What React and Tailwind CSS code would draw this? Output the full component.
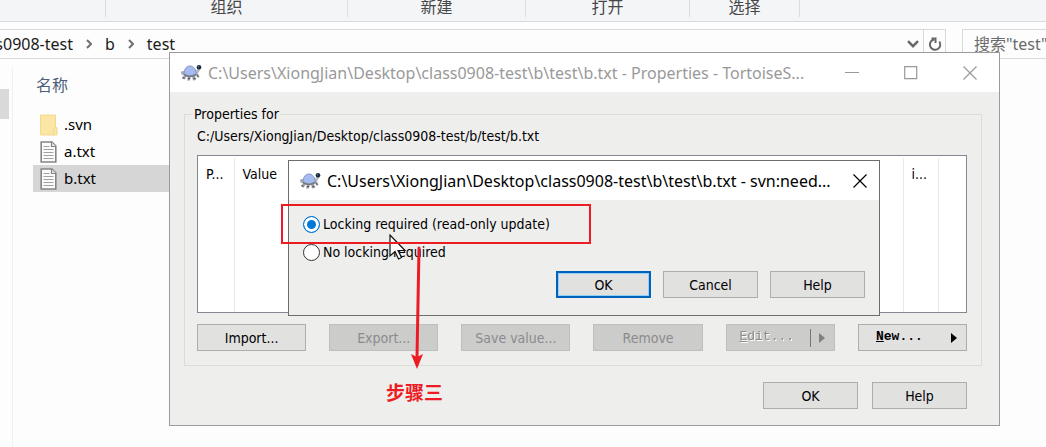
import React from "react";

const ui = "font-['Noto_Sans','Noto_Sans_CJK_SC',sans-serif]";
const dialogText = "font-['DejaVu_Sans_Condensed','Noto_Sans',sans-serif] text-sm";

function Turtle() {
  return (
    <svg width="22" height="18" viewBox="0 0 22 18" aria-hidden="true" className="shrink-0">
      <path d="M1 8c1-1.500 3-1 4 0v2.500L3 11C1.500 11 .8 9.500 1 8z" fill="#a9acb3" />
      <path d="M4 11l-2 3.500 2.500 1L7 12zM8 12l-1 4.500h3L11 12zM12 12l1 4.500 3-.5-1-4.500zM15 10l3 4 1.500-1.500L17 8z" fill="#9b9da4" />
      <path d="M15 8.500l3-4.500 2.500 1.500L17.500 10z" fill="#b9bbc1" />
      <path d="M4 10.500C4 5 6.500 2 10 2s6.500 3.500 6 8.500c-3.500 2-8.500 2-12 0z" fill="#a3bbf0" stroke="#8493bd" />
      <path d="M4 10.500c3.500 2.200 8.500 2.200 12 0" fill="none" stroke="#777b88" strokeWidth="1.500" />
      <path d="M2.500 13l2 2M8 14.500h2M13.500 14.500h2M17 11.500l1.500 1" stroke="#4f5158" strokeWidth="1" />
      <circle cx="19" cy="3.200" r="2.300" fill="#18283c" />
      <circle cx="18.500" cy="2.700" r=".8" fill="#3c79a0" />
    </svg>
  );
}

function FolderIcon() {
  return (
    <svg width="18" height="22" viewBox="0 0 18 22" aria-hidden="true">
      <path d="M.5 1h15v12.500h1.500V21H.5z" fill="#fbe6a6" />
      <path d="M.5 1h15v12.500M13.500 21v-6.500l1.500-1h2V21H.5V1" fill="none" stroke="#f3d98c" />
    </svg>
  );
}

function FileIcon() {
  return (
    <svg width="18" height="22" viewBox="0 0 18 22" aria-hidden="true">
      <path d="M1.200 1h10.800L15.800 5V21H1.200z" fill="#fbfbfb" stroke="#858585" strokeWidth="1.600" />
      <path d="M11.500 1v4.500H16" fill="#e4e4e4" stroke="#858585" strokeWidth="1.200" />
      <path d="M3.500 5.500h6M3.500 8.500h10M3.500 11.500h10M3.500 14.500h10M3.500 17.500h10" stroke="#a0a0a0" />
    </svg>
  );
}

function Crumb() {
  return (
    <svg width="6" height="10" viewBox="0 0 6 10" fill="none" stroke="#707070" strokeWidth="2" aria-hidden="true">
      <path d="M1 1l4 4-4 4" />
    </svg>
  );
}

function CloseIcon() {
  return (
    <svg width="14" height="14" viewBox="0 0 14 14" stroke="currentColor" strokeWidth="1.200" aria-hidden="true">
      <path d="M.5.5l13 13M13.500.5l-13 13" />
    </svg>
  );
}

function PushButton({ children, className = "", primary = false, ...rest }) {
  const edge = primary
    ? "border-2 border-[#0062b8] shadow-[inset_0_0_0_1px_#8fd0ff]"
    : "border border-[#adadad] disabled:border-[#bfbfbf]";
  return (
    <button
      type="button"
      className={`flex h-[27px] items-center justify-center bg-[#e1e1e0] text-black disabled:bg-[#cccccb] disabled:text-[#8b8b8b] ${edge} ${className}`}
      {...rest}
    >
      {children}
    </button>
  );
}

function Explorer() {
  const files = [".svn", "a.txt", "b.txt"];
  return (
    <div className="flex min-h-screen flex-col">
      <div className="flex h-[22px] border-b border-[#dadbdc] bg-[#f4f5f7] text-base leading-[14px] text-[#474747]">
        <div className="mb-1 w-[106px] border-r border-[#dcdde0]" />
        <div className="mb-1 w-[242px] border-r border-[#dcdde0] text-center">组织</div>
        <div className="mb-1 w-[178px] border-r border-[#dcdde0] text-center">新建</div>
        <div className="mb-1 w-[164px] border-r border-[#dcdde0] text-center">打开</div>
        <div className="mb-1 w-[110px] border-r border-[#dcdde0] text-center">选择</div>
      </div>
      <div className="mt-[7px] flex h-[30px] gap-4">
        <nav className="flex flex-1 items-center border-y border-r border-[#d9d9d9] text-base text-[#1a1a1a]">
          <span className="flex w-[73px] justify-end whitespace-nowrap">class0908-test</span>
          <span className="ml-[13px]"><Crumb /></span>
          <span className="ml-[13px]">b</span>
          <span className="ml-[13px]"><Crumb /></span>
          <span className="ml-[13px]">test</span>
          <button type="button" aria-label="History" className="ml-auto flex h-full w-5 items-center justify-center">
            <svg width="12" height="8" viewBox="0 0 12 8" fill="none" stroke="#666" strokeWidth="2.400"><path d="M1 1.200l5 5 5-5" /></svg>
          </button>
          <button type="button" aria-label="Refresh" className="flex h-full w-[22px] items-center justify-center border-l border-[#d9d9d9]">
            <svg width="14" height="16" viewBox="0 0 14 16" fill="none" stroke="#666" strokeWidth="2">
              <path d="M11.300 5.500A5.200 5.200 0 1 1 6 3.500" />
              <path d="M3.500 2.500H7.500V7" />
            </svg>
          </button>
        </nav>
        <input aria-label="搜索" readOnly defaultValue={'搜索"test"'} className="w-[84px] border-y border-l border-[#d9d9d9] bg-transparent pl-[11px] text-base text-[#6b6b6b] outline-none" />
      </div>
      <div className="flex flex-1">
        <div className="mt-[9px] w-[13px] border-r border-[#f0f1f2] pt-[21px]">
          <div className="h-[30px] w-[9px] bg-[#d9d9d9]" />
        </div>
        <div className="w-[300px] pl-5 pt-[14px]">
          <div className="mb-[14px] pl-[3px] text-base leading-6 text-[#4c607a]">名称</div>
          <ul className="text-[15px] text-black">
            {files.map((f, i) => (
              <li key={f} className={`flex h-[27px] items-center gap-1.5 pl-[7px] ${i === 2 ? "bg-[#d6d6d6]" : ""}`}>
                {i === 0 ? <FolderIcon /> : <FileIcon />}
                {f}
              </li>
            ))}
          </ul>
        </div>
      </div>
    </div>
  );
}

function PropertiesDialog() {
  return (
    <section className={`absolute left-[169px] top-[52px] w-[831px] border border-[#9a9a9a] bg-[#eeeeed] ${dialogText}`}>
      <header className={`flex h-[39px] items-center bg-white pl-2.5 text-[#999] ${ui}`}>
        <Turtle />
        <h1 className="ml-1.5 text-base">C:\Users\XiongJian\Desktop\class0908-test\b\test\b.txt - Properties - TortoiseS...</h1>
        <div className="ml-auto flex">
          <button type="button" aria-label="Minimize" className="flex w-[59px] justify-center py-3">
            <svg width="14" height="14" viewBox="0 0 14 14" stroke="currentColor"><path d="M0 6.500h14" /></svg>
          </button>
          <button type="button" aria-label="Maximize" className="flex w-[59px] justify-center py-3">
            <svg width="14" height="14" viewBox="0 0 14 14" fill="none" stroke="currentColor" strokeWidth="1.200"><path d="M.7.700h12v12H.7z" /></svg>
          </button>
          <button type="button" aria-label="Close" className="flex w-[59px] justify-center py-3"><CloseIcon /></button>
        </div>
      </header>
      <div className="pb-4 pl-[14px] pr-[17px] pt-3">
        <fieldset className="border border-[#dcdcdc] pb-[14px] pl-3 pr-[14px]">
          <legend className="-ml-1 px-px leading-5 text-black">Properties for</legend>
          <p className="mb-[7px] leading-6 text-black">C:/Users/XiongJian/Desktop/class0908-test/b/test/b.txt</p>
          <div className="flex h-[158px] border border-[#828790] bg-white pt-0.5">
            <table className="h-full w-full table-fixed text-left text-black">
              <colgroup>
                <col className="w-9" />
                <col />
                <col className="w-[35px]" />
                <col className="w-7" />
              </colgroup>
              <thead>
                <tr className="h-8">
                  <th className="border-r border-[#e6eaf2] pl-2 font-normal">P...</th>
                  <th className="border-r border-[#e6eaf2] pl-2 font-normal">Value</th>
                  <th className="border-r border-[#e6eaf2] pl-2 font-normal">i...</th>
                  <td />
                </tr>
              </thead>
              <tbody>
                <tr>
                  <td className="border-r border-[#e6eaf2]" />
                  <td className="border-r border-[#e6eaf2]" />
                  <td className="border-r border-[#e6eaf2]" />
                  <td />
                </tr>
              </tbody>
            </table>
          </div>
          <div className="mt-[11px] grid grid-cols-6 gap-[23px]">
            <PushButton>Import...</PushButton>
            <PushButton disabled>Export...</PushButton>
            <PushButton disabled>Save value...</PushButton>
            <PushButton disabled>Remove</PushButton>
            <PushButton disabled className="font-['Liberation_Mono',monospace] text-[13px]">
              <span className="ml-1 drop-shadow-[1px_1px_0_#fff]"><u>E</u>dit...</span>
              <span className="ml-4 mr-2 h-[18px] border-r border-[#777]" />
              <svg width="6" height="10" viewBox="0 0 6 10"><path d="M0 0l6 5-6 5z" fill="#808080" /></svg>
            </PushButton>
            <PushButton className="font-['Liberation_Mono',monospace] text-[13px]">
              <span className="ml-2 font-bold"><u>N</u>ew...</span>
              <svg width="6" height="10" viewBox="0 0 6 10" className="ml-7"><path d="M0 0l6 5-6 5z" fill="#000" /></svg>
            </PushButton>
          </div>
        </fieldset>
        <div className="mt-4 flex justify-end gap-[14px] pr-[15px]">
          <PushButton className="w-[95px]">OK</PushButton>
          <PushButton className="w-[95px]">Help</PushButton>
        </div>
      </div>
    </section>
  );
}

function Radio({ label, ...rest }) {
  return (
    <label className="flex h-7 items-center gap-[3px] text-black">
      <input
        type="radio"
        name="locking"
        className="h-[17px] w-[17px] appearance-none rounded-full border border-[#333] bg-white checked:border-[#0078d7] checked:bg-[#0078d7] checked:shadow-[inset_0_0_0_3px_#fff]"
        {...rest}
      />
      {label}
    </label>
  );
}

function LockDialog() {
  return (
    <section className={`absolute left-[288px] top-[160px] w-[592px] border border-[#6d6d6d] bg-[#eeeeed] ${dialogText}`}>
      <header className={`flex h-[39px] items-center bg-white pl-2.5 text-black ${ui}`}>
        <Turtle />
        <h2 className="ml-1.5 text-base">C:\Users\XiongJian\Desktop\class0908-test\b\test\b.txt - svn:need...</h2>
        <button type="button" aria-label="Close" className="ml-auto mr-3 flex"><CloseIcon /></button>
      </header>
      <div className="px-[14px] pb-[17px] pt-2.5">
        <Radio label="Locking required (read-only update)" defaultChecked />
        <Radio label="No locking required" />
        <div className="mt-[5px] flex justify-end gap-3">
          <PushButton primary className="w-[95px]">OK</PushButton>
          <PushButton className="w-[95px]">Cancel</PushButton>
          <PushButton className="w-[95px]">Help</PushButton>
        </div>
      </div>
    </section>
  );
}

function Annotations() {
  return (
    <>
      <svg width="18" height="27" viewBox="0 0 18 27" className="absolute left-[389px] top-[234px]" aria-hidden="true">
        <path d="M1 1v21l5-4.500 3.500 7.500 3-1.500L9 16.500h7z" fill="#fff" stroke="#111" strokeWidth="1.200" />
      </svg>
      <div className="absolute left-[281px] top-[204px] h-10 w-[310px] border-2 border-[#ed1c24]" />
      <svg width="14" height="124" viewBox="0 0 14 124" className="absolute left-[410px] top-[246px]" aria-hidden="true">
        <path d="M9 2L7 112" stroke="#ed1c24" strokeWidth="3" strokeLinecap="round" />
        <path d="M1 108l6 3 6-3-6 15z" fill="#ed1c24" />
      </svg>
      <p className="absolute left-[386px] top-[381px] text-[19px] font-bold leading-6 text-[#ed1c24]">步骤三</p>
    </>
  );
}

export default function App() {
  return (
    <main className={`relative min-h-screen overflow-hidden bg-[#fdfdfd] ${ui}`}>
      <Explorer />
      <PropertiesDialog />
      <LockDialog />
      <Annotations />
    </main>
  );
}
